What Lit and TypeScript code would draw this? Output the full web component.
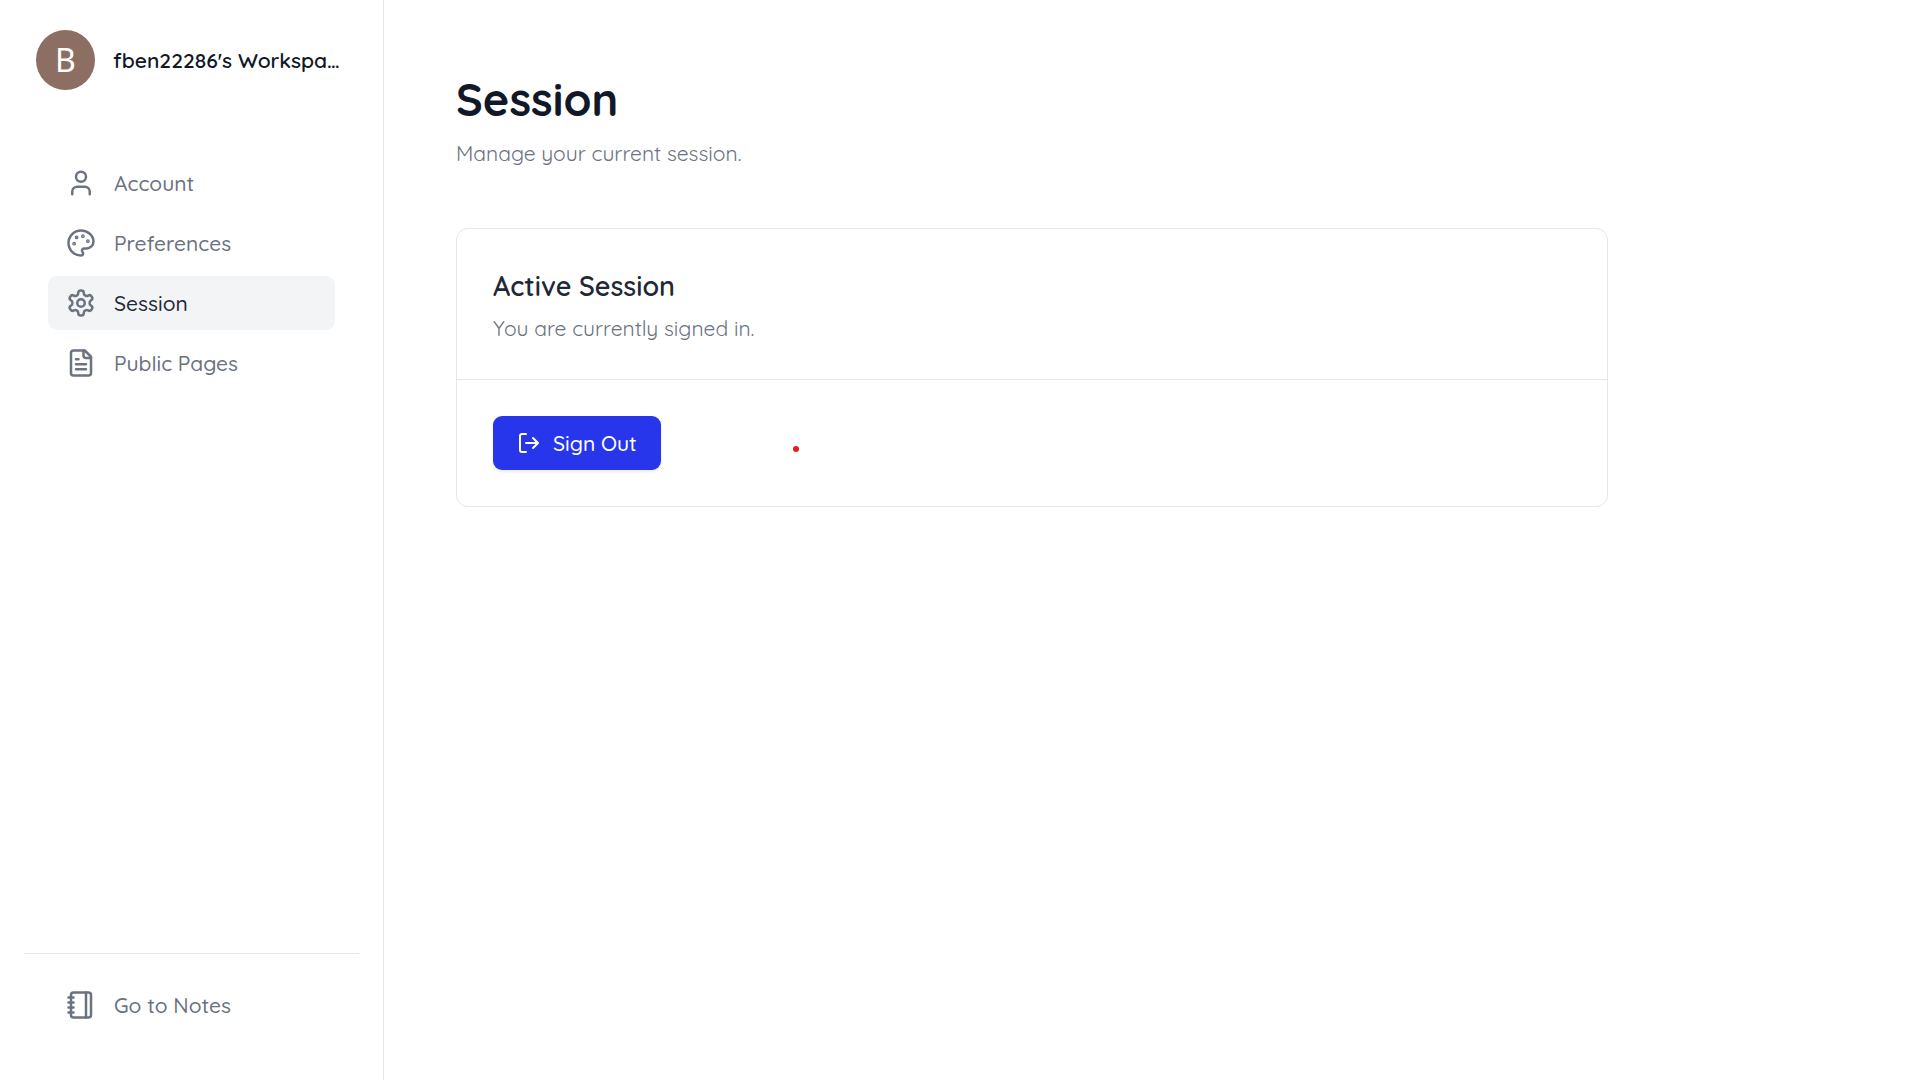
import { LitElement, html, svg, css, type SVGTemplateResult } from "lit";
import { customElement, property, state } from "lit/decorators.js";

const icons: Record<string, SVGTemplateResult> = {
  user: svg`<path d="M19 21v-2a4 4 0 0 0-4-4H9a4 4 0 0 0-4 4v2"/><circle cx="12" cy="7" r="4"/>`,
  palette: svg`<circle cx="13.5" cy="6.5" r=".5" fill="currentColor"/><circle cx="17.5" cy="10.5" r=".5" fill="currentColor"/><circle cx="8.5" cy="7.5" r=".5" fill="currentColor"/><circle cx="6.5" cy="12.5" r=".5" fill="currentColor"/><path d="M12 2C6.5 2 2 6.5 2 12s4.5 10 10 10c.926 0 1.648-.746 1.648-1.688 0-.437-.18-.835-.437-1.125-.29-.289-.438-.652-.438-1.125a1.64 1.64 0 0 1 1.668-1.668h1.996c3.051 0 5.555-2.503 5.555-5.554C21.965 6.012 17.461 2 12 2z"/>`,
  settings: svg`<path d="M12.22 2h-.44a2 2 0 0 0-2 2v.18a2 2 0 0 1-1 1.73l-.43.25a2 2 0 0 1-2 0l-.15-.08a2 2 0 0 0-2.73.73l-.22.38a2 2 0 0 0 .73 2.73l.15.1a2 2 0 0 1 1 1.72v.51a2 2 0 0 1-1 1.74l-.15.09a2 2 0 0 0-.73 2.73l.22.38a2 2 0 0 0 2.73.73l.15-.08a2 2 0 0 1 2 0l.43.25a2 2 0 0 1 1 1.73V20a2 2 0 0 0 2 2h.44a2 2 0 0 0 2-2v-.18a2 2 0 0 1 1-1.73l.43-.25a2 2 0 0 1 2 0l.15.08a2 2 0 0 0 2.73-.73l.22-.39a2 2 0 0 0-.73-2.73l-.15-.08a2 2 0 0 1-1-1.74v-.5a2 2 0 0 1 1-1.74l.15-.09a2 2 0 0 0 .73-2.73l-.22-.38a2 2 0 0 0-2.73-.73l-.15.08a2 2 0 0 1-2 0l-.43-.25a2 2 0 0 1-1-1.73V4a2 2 0 0 0-2-2z"/><circle cx="12" cy="12" r="3"/>`,
  file: svg`<path d="M15 2H6a2 2 0 0 0-2 2v16a2 2 0 0 0 2 2h12a2 2 0 0 0 2-2V7Z"/><path d="M14 2v4a2 2 0 0 0 2 2h4M10 9H8M16 13H8M16 17H8"/>`,
  notebook: svg`<path d="M2 6h4M2 10h4M2 14h4M2 18h4"/><rect width="16" height="20" x="4" y="2" rx="2"/><path d="M16 2v20"/>`,
  logout: svg`<path d="M9 21H5a2 2 0 0 1-2-2V5a2 2 0 0 1 2-2h4"/><path d="m16 17 5-5-5-5M21 12H9"/>`,
};

@customElement("line-icon")
class LineIcon extends LitElement {
  @property() name = "user";

  static styles = css`
    :host {
      display: block;
      flex: none;
      width: 30px;
      height: 30px;
    }
    .glyph {
      display: block;
      width: 100%;
      height: 100%;
      fill: none;
      stroke: currentColor;
      stroke-width: 2;
      stroke-linecap: round;
      stroke-linejoin: round;
    }
  `;

  render() {
    return html`<svg class="glyph" viewBox="0 0 24 24" aria-hidden="true">${icons[this.name]}</svg>`;
  }
}

@customElement("nav-item")
class NavItem extends LitElement {
  @property() icon = "user";
  @property() label = "";
  @property() href = "#";
  @property({ type: Boolean }) active = false;

  static styles = css`
    :host {
      display: block;
    }
    .link {
      display: flex;
      align-items: center;
      gap: 18px;
      padding: 12px 18px;
      border-radius: 9px;
      color: #6b7280;
      font-size: 21px;
      font-weight: 500;
      line-height: 30px;
      text-decoration: none;
    }
    .link.active {
      background: #f3f4f6;
    }
    .active .label {
      color: #1f2937;
    }
  `;

  render() {
    return html`<a
      class="link ${this.active ? "active" : ""}"
      href=${this.href}
      aria-current=${this.active ? "page" : "false"}
      ><line-icon name=${this.icon}></line-icon><span class="label">${this.label}</span></a
    >`;
  }
}

@customElement("app-root")
class AppRoot extends LitElement {
  @state() private current = "Session";

  private items = [
    { label: "Account", icon: "user", href: "#account" },
    { label: "Preferences", icon: "palette", href: "#preferences" },
    { label: "Session", icon: "settings", href: "#session" },
    { label: "Public Pages", icon: "file", href: "#public-pages" },
  ];

  static styles = css`
    :host {
      display: flex;
      min-height: 100vh;
      background: #fff;
      color: #111827;
      font-family: Quicksand, Lato, "Open Sans", sans-serif;
      font-size: 21px;
      line-height: 30px;
    }
    .sidebar {
      display: flex;
      flex-direction: column;
      flex: none;
      box-sizing: border-box;
      width: 384px;
      border-right: 1px solid #e5e7eb;
    }
    .workspace {
      display: flex;
      align-items: center;
      gap: 18px;
      padding: 30px 36px;
    }
    .avatar {
      display: grid;
      place-items: center;
      flex: none;
      width: 59px;
      height: 60px;
      border-radius: 50%;
      background: #8d6e63;
      color: #fff;
      font: 32px/36px "Noto Sans", sans-serif;
    }
    .name {
      white-space: nowrap;
      font-weight: 600;
    }
    .nav {
      display: grid;
      gap: 6px;
      padding: 36px 48px;
    }
    .bottom {
      margin: auto 24px 0;
      padding: 24px 24px 48px;
      border-top: 1px solid #e5e7eb;
    }
    .main {
      position: relative;
      flex: 1;
      min-width: 0;
      padding: 72px;
    }
    .content {
      max-width: 1152px;
    }
    .title {
      margin: 0 0 12px;
      font-size: 45px;
      line-height: 54px;
      font-weight: 700;
    }
    .muted {
      margin: 0;
      color: #6b7280;
      font-weight: 400;
    }
    .card {
      margin-top: 60px;
      border: 1px solid #e5e7eb;
      border-radius: 12px;
    }
    .card-head {
      padding: 36px;
      border-bottom: 1px solid #e5e7eb;
    }
    .card-title {
      margin: 0 0 6px;
      color: #1f2937;
      font-size: 27px;
      line-height: 42px;
      font-weight: 600;
    }
    .card-body {
      padding: 36px;
    }
    .sign-out {
      display: flex;
      align-items: center;
      gap: 12px;
      padding: 12px 24px;
      border: 0;
      border-radius: 9px;
      background: #2736ea;
      box-shadow: 0 2px 3px rgb(0 0 0 / 0.08);
      color: #fff;
      font: inherit;
      font-weight: 500;
      cursor: pointer;
    }
    .small {
      width: 24px;
      height: 24px;
    }
    .pointer {
      position: absolute;
      left: 409px;
      top: 446px;
      width: 6px;
      height: 6px;
      border-radius: 50%;
      background: #ea1a1d;
    }
  `;

  render() {
    return html`
      <aside class="sidebar">
        <header class="workspace">
          <span class="avatar" aria-hidden="true">B</span>
          <span class="name">fben22286's Workspa…</span>
        </header>
        <nav class="nav" aria-label="Settings">
          ${this.items.map(
            (item) => html`<nav-item
              icon=${item.icon}
              label=${item.label}
              href=${item.href}
              ?active=${item.label === this.current}
              @click=${() => (this.current = item.label)}
            ></nav-item>`,
          )}
        </nav>
        <div class="bottom">
          <nav-item icon="notebook" label="Go to Notes" href="#notes"></nav-item>
        </div>
      </aside>
      <main class="main">
        <div class="content">
          <h1 class="title">Session</h1>
          <p class="muted">Manage your current session.</p>
          <section class="card">
            <header class="card-head">
              <h2 class="card-title">Active Session</h2>
              <p class="muted">You are currently signed in.</p>
            </header>
            <div class="card-body">
              <button class="sign-out" type="button">
                <line-icon class="small" name="logout"></line-icon>Sign Out
              </button>
            </div>
          </section>
        </div>
        <span class="pointer"></span>
      </main>
    `;
  }
}
